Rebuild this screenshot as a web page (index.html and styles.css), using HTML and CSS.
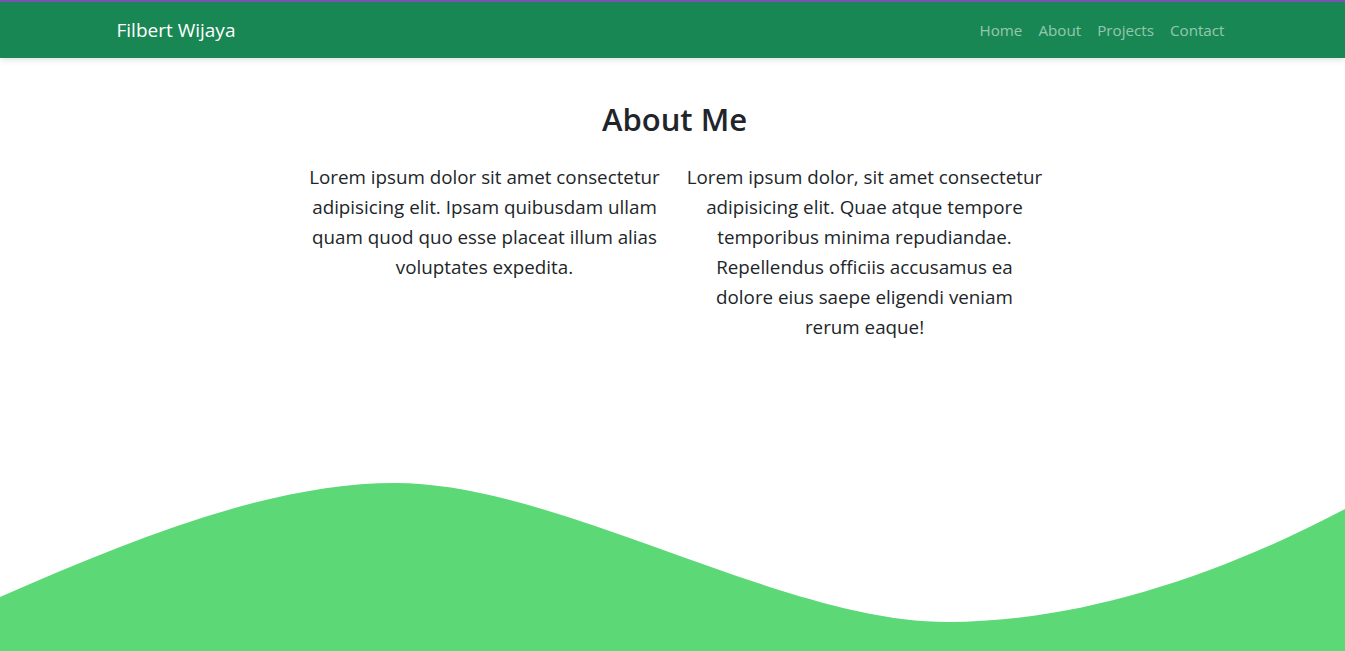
FILE: index.html
```html
<!DOCTYPE html>
<html lang="en">
<head>
<meta charset="utf-8">
<title>Filbert Wijaya</title>
<link rel="stylesheet" href="styles.css">
</head>
<body>
<nav class="navbar">
  <div class="container nav-inner">
    <a class="brand" href="#">Filbert Wijaya</a>
    <ul class="nav-links">
      <li><a href="#">Home</a></li>
      <li><a href="#">About</a></li>
      <li><a href="#">Projects</a></li>
      <li><a href="#">Contact</a></li>
    </ul>
  </div>
</nav>
<section class="about">
  <div class="container about-inner">
    <h2 class="title">About Me</h2>
    <div class="row">
      <div class="col"><p class="lead">Lorem ipsum dolor sit amet consectetur adipisicing elit. Ipsam quibusdam ullam quam quod quo esse placeat illum alias voluptates expedita.</p></div>
      <div class="col"><p class="lead">Lorem ipsum dolor, sit amet consectetur adipisicing elit. Quae atque tempore temporibus minima repudiandae. Repellendus officiis accusamus ea dolore eius saepe eligendi veniam rerum eaque!</p></div>
    </div>
  </div>
</section>
<div class="wave">
  <svg viewBox="0 0 1345 181" preserveAspectRatio="none" xmlns="http://www.w3.org/2000/svg">
    <path fill="#5cd877" d="M0,127 C130,70 270,13 395,13 C560,13 780,152 948,152 C1080,152 1220,105 1345,39 L1345,181 L0,181 Z"/>
  </svg>
</div>
</body>
</html>
```

FILE: styles.css
```css
* { box-sizing: border-box; }
html, body { margin: 0; padding: 0; }
body {
  font-family: "Open Sans", "Noto Sans", sans-serif;
  color: #212529;
  background: #fff;
  overflow: hidden;
}
.container {
  width: 1140px;
  margin: 0 auto;
  padding: 0 12px;
}
.navbar {
  background: #198754;
  border-top: 2px solid #7952b3;
  height: 58px;
  box-shadow: 0 2px 6px rgba(0,0,0,0.12);
  position: relative;
  z-index: 1;
}
.nav-inner {
  height: 100%;
  display: flex;
  align-items: center;
  justify-content: space-between;
}
.brand {
  color: #fff;
  text-decoration: none;
  font-size: 19px;
  margin-left: 2px;
}
.nav-links {
  list-style: none;
  margin: 0;
  padding: 0;
  display: flex;
}
.nav-links a {
  display: block;
  padding: 8px 8px;
  color: rgba(255,255,255,0.55);
  text-decoration: none;
  font-size: 15.2px;
}
.nav-links li:last-child a { padding-right: 6px; }
.about {
  height: 412px;
  padding-top: 43px;
  text-align: center;
}
.about-inner {
  padding-left: 16px;
}
.title {
  margin: 0 0 24px;
  font-size: 31px;
  font-weight: 600;
  line-height: 1.2;
}
.row {
  display: flex;
  justify-content: center;
}
.col {
  width: 380px;
  padding: 0 12px;
}
.lead {
  margin: 0;
  font-size: 18.8px;
  line-height: 30px;
}
.wave svg {
  display: block;
  width: 100%;
  height: 181px;
}
```
